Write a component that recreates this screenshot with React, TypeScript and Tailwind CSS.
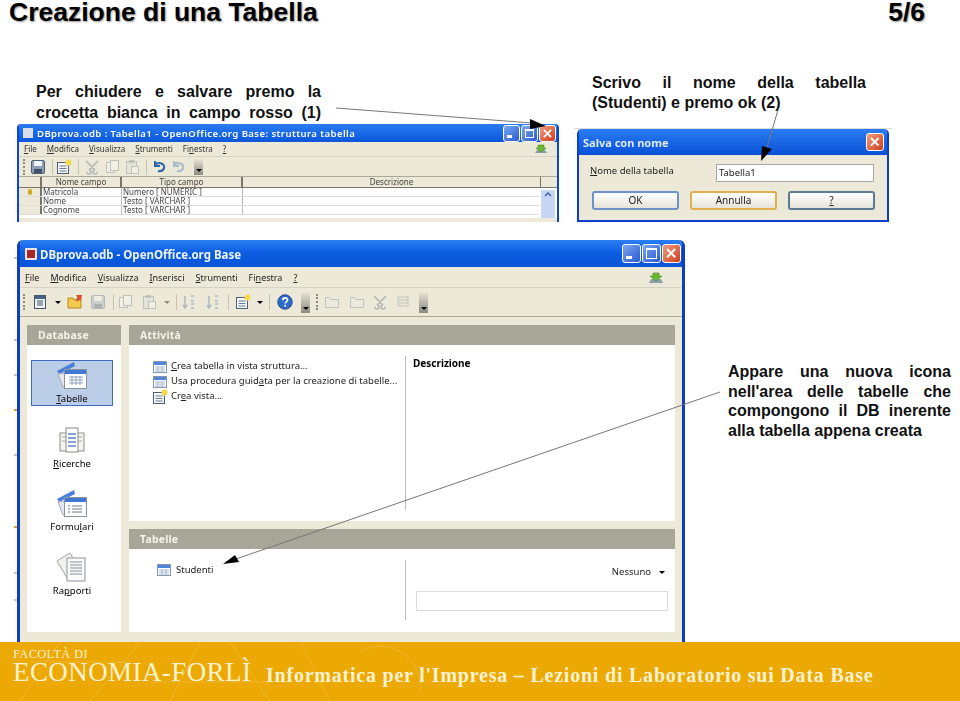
const ui = "font-['Noto_Sans',sans-serif]";

function Under({ text, at }: { text: string; at: number }) {
  return (
    <>
      {text.slice(0, at)}
      <u>{text[at]}</u>
      {text.slice(at + 1)}
    </>
  );
}

function TableIcon({ size = 14 }: { size?: number }) {
  return (
    <svg width={size} height={size} viewBox="0 0 14 14" className="shrink-0">
      <rect x="0.5" y="1.5" width="13" height="11" fill="#fff" stroke="#8a98ad" />
      <rect x="1" y="2" width="12" height="3" fill="#4f86d8" />
      <path d="M2 7h10M2 9h10M2 11h10M5 6v6M9 6v6" stroke="#9fb3cc" strokeWidth="0.8" />
    </svg>
  );
}

function XpButtons({ size }: { size: number }) {
  const box = { width: size, height: size };
  return (
    <div className="flex items-center gap-[1px]">
      <div style={box} className="flex items-end rounded-[3px] border border-white bg-gradient-to-br from-[#7ea6ee] to-[#2b58d0] p-[3px]">
        <div className="h-[3px] w-1/2 bg-white" />
      </div>
      <div style={box} className="rounded-[3px] border border-white bg-gradient-to-br from-[#7ea6ee] to-[#2b58d0] p-[3px]">
        <div className="h-full w-full border border-t-2 border-white" />
      </div>
      <CloseButton size={size} />
    </div>
  );
}

function CloseButton({ size }: { size: number }) {
  return (
    <div style={{ width: size, height: size }} className="flex items-center justify-center rounded-[3px] border border-white bg-gradient-to-br from-[#ee9a7c] to-[#cf3a14]">
      <svg viewBox="0 0 10 10" className="h-3/5 w-3/5">
        <path d="M1 1l8 8M9 1l-8 8" stroke="#fff" strokeWidth="2" />
      </svg>
    </div>
  );
}

type ToolKind = "save" | "doc" | "folder" | "copy" | "paste" | "help" | "form" | "sort" | "cut" | "undo" | "outline" | "lines";

function Toolbtn({ kind, faded, className = "" }: { kind: ToolKind; faded?: boolean; className?: string }) {
  return (
    <svg width="16" height="16" viewBox="0 0 16 16" className={`shrink-0 ${faded ? "opacity-35" : ""} ${className}`}>
      {kind === "save" && (
        <>
          <rect x="1.5" y="1.5" width="13" height="13" rx="1.5" fill="#8fa0b5" stroke="#4d5f78" />
          <rect x="4" y="2" width="8" height="5" fill="#eef2f6" />
          <rect x="4" y="10" width="8" height="4" fill="#405068" />
        </>
      )}
      {kind === "doc" && (
        <>
          <rect x="2.5" y="1.5" width="11" height="13" fill="#eef1f5" stroke="#46566d" />
          <rect x="3" y="2" width="10" height="3" fill="#49628a" />
          <path d="M5 7h6M5 9h6M5 11h6" stroke="#46566d" />
        </>
      )}
      {kind === "folder" && (
        <>
          <path d="M1 14V4h5l1 2h7v8z" fill="#f3c84f" stroke="#b68a1c" />
          <path d="M9 1h6l-1 6-1.5-1.5-2 2-2-2 2-2z" fill="#d8502c" />
        </>
      )}
      {kind === "copy" && (
        <>
          <rect x="2.5" y="3.5" width="8" height="10" fill="#fff" stroke="#6d7a88" />
          <rect x="6.5" y="1.5" width="8" height="10" fill="#fff" stroke="#6d7a88" />
        </>
      )}
      {kind === "paste" && (
        <>
          <rect x="2.5" y="2.5" width="10" height="12" fill="#ddd" stroke="#6d7a88" />
          <rect x="5" y="1" width="5" height="3" fill="#6d7a88" />
          <rect x="7.5" y="7.5" width="7" height="7" fill="#fff" stroke="#6d7a88" />
        </>
      )}
      {kind === "sort" && <path d="M3 2v11M1 11l2 3 2-3M9 2l3 0M9 7l3 0M9 10l3 0M9 14l3 0" fill="none" stroke="#3a5d8f" strokeWidth="1.5" />}
      {kind === "cut" && <path d="M2 2l9 9M14 2l-9 9M5 11a2 2 0 1 1-2 2M11 11a2 2 0 1 0 2 2" fill="none" stroke="#4a5e78" strokeWidth="1.6" />}
      {kind === "undo" && <path d="M3 6a5 4 0 1 1 3 6M3 2v5h5" fill="none" stroke="#2d62ad" strokeWidth="2" />}
      {kind === "outline" && <path d="M1.5 13.5V3.5h4l1 2h8v8z" fill="#eee" stroke="#6d7a88" />}
      {kind === "lines" && <path d="M3 3h10M3 6h10M3 9h10M3 12h10M3 3v9M13 3v9" fill="none" stroke="#6d7a88" />}
      {kind === "help" && (
        <>
          <circle cx="8" cy="8" r="7.2" fill="#2f6bc9" stroke="#1c4690" />
          <path d="M5.7 6.2c.2-3 4.8-3 4.8-.2 0 1.8-2.3 1.8-2.3 3.6" fill="none" stroke="#fff" strokeWidth="1.7" />
          <rect x="7.3" y="10.8" width="1.8" height="1.8" fill="#fff" />
        </>
      )}
      {kind === "form" && (
        <>
          <rect x="1.5" y="3.5" width="11" height="11" fill="#f6f7f9" stroke="#4d5f78" />
          <path d="M3.5 7h7M3.5 9.5h7M3.5 12h7" stroke="#6a7b92" />
          <circle cx="12.5" cy="3.5" r="3" fill="#f6d84a" />
        </>
      )}
    </svg>
  );
}

function Grip({ className = "" }: { className?: string }) {
  return <div className={`h-[16px] w-[2px] shrink-0 border-l-2 border-dotted border-[#8f8c7c] ${className}`} />;
}

function Sep({ className = "" }: { className?: string }) {
  return <div className={`h-[16px] w-px shrink-0 bg-[#c6c3b2] ${className}`} />;
}

function Caret({ className = "" }: { className?: string }) {
  return <div className={`h-0 w-0 shrink-0 border-x-[3px] border-t-[3px] border-x-transparent border-t-black ${className}`} />;
}

function Overflow({ h, className = "" }: { h: number; className?: string }) {
  return (
    <div style={{ height: h }} className={`flex w-[9px] shrink-0 items-end justify-center bg-gradient-to-b from-[#e8e5d6] to-[#8d8b7f] pb-[3px] ${className}`}>
      <Caret />
    </div>
  );
}

function SideItem({ label, at, selected, children }: { label: string; at: number; selected?: boolean; children: React.ReactNode }) {
  return (
    <div className={`ml-[4px] mr-[8px] flex h-[46px] flex-col items-center justify-end ${selected ? "border border-[#3c6cc4] bg-[#bccde8]" : ""}`}>
      {children}
      <span className="mt-[1px] text-[9.5px] leading-[13px] text-black">
        <Under text={label} at={at} />
      </span>
    </div>
  );
}

function BigIcon({ kind }: { kind: "table" | "query" | "form" | "report" }) {
  if (kind === "query") {
    return (
      <svg width="30" height="30" viewBox="0 0 30 30">
        <rect x="3" y="7" width="9" height="18" fill="#f3f3f1" stroke="#8c8c88" />
        <rect x="18" y="7" width="9" height="18" fill="#f3f3f1" stroke="#8c8c88" />
        <rect x="9" y="2" width="12" height="24" fill="#fff" stroke="#8c8c88" />
        <path d="M11 8h8M11 12h8M11 16h8M11 20h8" stroke="#5c85c8" strokeWidth="1.5" />
        <path d="M5 11h5M5 15h5M20 11h5M20 15h5" stroke="#a8a8a4" />
      </svg>
    );
  }
  if (kind === "report") {
    return (
      <svg width="32" height="32" viewBox="0 0 32 32">
        <path d="M1 10L14 2l12 20-13 8z" fill="#f2f2f0" stroke="#a4a4a0" />
        <rect x="11" y="7" width="18" height="23" fill="#fafafa" stroke="#8f959c" />
        <path d="M14 11h12M14 14h12M14 17h12M14 20h12M14 23h12" stroke="#8a9096" />
      </svg>
    );
  }
  return (
    <svg width="32" height="30" viewBox="0 0 32 30">
      <path d="M1 10L18 1l1 4L3 13z" fill="#4b80d8" />
      <path d="M2 13l8-1v14h-3z" fill="#e5e8ee" stroke="#a5abb5" />
      <rect x="8.5" y="8.5" width="22" height="19" fill="#fff" stroke="#8a93a0" />
      <rect x="9" y="9" width="21" height="4" fill="#3f78d2" />
      {kind === "table" ? (
        <path d="M13 16h14M13 19h14M13 22h14M16 15v9M20 15v9M24 15v9" stroke="#8ea2bf" />
      ) : (
        <path d="M12 17h2M16 17h10M12 20h2M16 20h10M12 23h2M16 23h10" stroke="#6f7884" />
      )}
    </svg>
  );
}

function StructureWindow() {
  const rows = [
    ["Matricola", "Numero [ NUMERIC ]"],
    ["Nome", "Testo [ VARCHAR ]"],
    ["Cognome", "Testo [ VARCHAR ]"],
  ];
  return (
    <div className={`${ui} h-[98px] overflow-hidden rounded-t-[4px] border-x-2 border-[#0c46d4] bg-[#ece9d8] blur-[0.3px]`}>
      <div className="flex h-[18px] items-center justify-between bg-gradient-to-b from-[#2a7cf0] to-[#0a56dc] pl-[4px] pr-[1px]">
        <div className="flex items-center gap-[4px]">
          <div className="h-[10px] w-[10px] bg-[#d8dde8]" />
          <span className="pt-[2px] text-[9.5px] font-semibold tracking-[0.44px] text-white">DBprova.odb : Tabella1 - OpenOffice.org Base: struttura tabella</span>
        </div>
        <XpButtons size={17} />
      </div>
      <div className="flex h-[15px] items-center justify-between border-b border-[#d6d3c2] px-[5px] text-[8px] text-[#333]">
        <div className="flex gap-[10px]">
          <span><Under text="File" at={0} /></span>
          <span><Under text="Modifica" at={0} /></span>
          <span><Under text="Visualizza" at={0} /></span>
          <span><Under text="Strumenti" at={0} /></span>
          <span><Under text="Finestra" at={2} /></span>
          <span><u>?</u></span>
        </div>
        <svg width="14" height="10" viewBox="0 0 14 10" className="mr-[4px]">
          <path d="M1 9h12L11 6H3z" fill="#8aa0a8" />
          <path d="M4 1h6v3h2L7 8 2 4h2z" fill="#6cb82c" stroke="#3f7f18" strokeWidth="0.5" />
        </svg>
      </div>
      <div className="flex h-[20px] items-center border-b border-[#aca899] pl-[4px]">
        <Grip />
        <Toolbtn kind="save" className="ml-[5px]" />
        <Sep className="ml-[6px]" />
        <Toolbtn kind="form" className="ml-[3px]" />
        <Sep className="ml-[6px]" />
        <Toolbtn kind="cut" faded className="ml-[5px]" />
        <Toolbtn kind="copy" faded className="ml-[4px]" />
        <Toolbtn kind="paste" faded className="ml-[4px]" />
        <Sep className="ml-[6px]" />
        <Toolbtn kind="undo" className="ml-[5px]" />
        <Toolbtn kind="undo" faded className="ml-[3px]" />
        <Overflow h={16} className="ml-[7px]" />
      </div>
      <div className="grid h-[11px] grid-cols-[23px_80px_121px_298px_1fr] border-b border-[#77756a] text-center text-[8px] leading-[10px] text-[#444]">
        <div className="border-r-2 border-[#77756a]" />
        <div className="border-r-2 border-[#77756a]">Nome campo</div>
        <div className="border-r-2 border-[#77756a]">Tipo campo</div>
        <div className="border-r border-[#77756a]">Descrizione</div>
        <div />
      </div>
      <div className="flex bg-white">
        <div className="flex-1">
          {rows.map(([name, type], i) => (
            <div key={name} className="grid h-[9px] grid-cols-[23px_80px_121px_1fr] border-b border-[#dcdcdc] text-[8px] leading-[8px] text-[#444]">
              <div className="flex items-center justify-center border-r-2 border-[#77756a] bg-[#ece9d8]">
                {i === 0 && <div className="h-[6px] w-[4px] rounded-full bg-[#d8a81c]" />}
              </div>
              <div className="border-r border-[#bbb] pl-[1px]">{name}</div>
              <div className="border-r border-[#bbb] pl-[1px]">{type}</div>
              <div />
            </div>
          ))}
        </div>
        <div className="mx-[2px] mt-[2px] flex h-[28px] w-[14px] justify-center bg-[#c6d6f4] pt-[2px]">
          <svg width="8" height="5" viewBox="0 0 8 5">
            <path d="M1 4l3-3 3 3" fill="none" stroke="#3a5f9f" strokeWidth="1.4" />
          </svg>
        </div>
      </div>
    </div>
  );
}

function SaveDialog() {
  return (
    <div className={`${ui} h-[93px] overflow-hidden rounded-t-[5px] border-x-[2px] border-b-[2px] border-[#0b3fc8] bg-[#ece9d8] blur-[0.3px]`}>
      <div className="flex h-[26px] items-center justify-between bg-gradient-to-b from-[#2a7cf0] to-[#0a50d8] pl-[4px] pr-[3px]">
        <span className="pt-[2px] text-[11px] font-bold text-[#dfe9fb]">Salva con nome</span>
        <CloseButton size={18} />
      </div>
      <div className="flex h-[36px] items-center pl-[11px] text-[9.5px] text-[#222]">
        <span className="w-[126px] pb-[4px]">
          <Under text="Nome della tabella" at={0} />
        </span>
        <div className="flex h-[18px] w-[158px] items-center border border-[#a6a6a2] bg-white pl-[2px]">Tabella1</div>
      </div>
      <div className="flex gap-[11px] pl-[13px] text-[10px] text-[#222]">
        {["OK", "Annulla", "?"].map((b) => (
          <div
            key={b}
            className={`flex h-[19px] w-[87px] items-center justify-center rounded-[3px] border-2 bg-gradient-to-b from-white to-[#e6e4d8] ${
              b === "Annulla" ? "border-[#e0b050]" : b === "OK" ? "border-[#6d92c8]" : "border-[#5b7a94]"
            }`}
          >
            {b === "?" ? <u>?</u> : b}
          </div>
        ))}
      </div>
    </div>
  );
}

function PanelHead({ title }: { title: string }) {
  return <div className="flex h-[20px] items-center bg-[#a8a698] pl-[11px] pt-[2px] text-[10.5px] font-bold tracking-[0.2px] text-[#f4f3ec]">{title}</div>;
}

function BaseWindow() {
  const actions: [string, number, React.ReactNode][] = [
    ["Crea tabella in vista struttura...", 0, <TableIcon />],
    ["Usa procedura guidata per la creazione di tabelle...", 18, <TableIcon />],
    ["Crea vista...", 2, <Toolbtn kind="form" className="-mx-[1px]" />],
  ];
  const menus: [string, number][] = [
    ["File", 0],
    ["Modifica", 0],
    ["Visualizza", 0],
    ["Inserisci", 0],
    ["Strumenti", 0],
    ["Finestra", 2],
  ];
  return (
    <div className={`${ui} flex h-[402px] w-[668px] flex-col overflow-hidden rounded-t-[6px] border-x-[3px] border-[#0c3fc0] bg-[#ece9d8] blur-[0.3px]`}>
      <div className="flex h-[27px] shrink-0 items-center justify-between bg-gradient-to-b from-[#2a7ef2] via-[#0a5be0] to-[#0a56d8] pl-[5px] pr-[1px]">
        <div className="flex items-center gap-[3px]">
          <div className="h-[12px] w-[12px] rounded-[1px] border-2 border-[#f0e4e0] bg-[#a82828]" />
          <span className="pt-[3px] text-[11.5px] font-bold text-[#eef3fd]">DBprova.odb - OpenOffice.org Base</span>
        </div>
        <XpButtons size={19} />
      </div>
      <div className="flex h-[21px] shrink-0 items-center justify-between border-b border-[#d6d3c2] pl-[5px] pr-[18px] pt-[1px] text-[9px] text-[#222]">
        <div className="flex gap-[11px]">
          {menus.map(([m, at]) => (
            <span key={m}>
              <Under text={m} at={at} />
            </span>
          ))}
          <span>
            <u>?</u>
          </span>
        </div>
        <svg width="16" height="12" viewBox="0 0 16 12">
          <path d="M1 11h14l-2-4H3z" fill="#8aa0a8" />
          <path d="M5 1h6v3h3l-6 5-6-5h3z" fill="#6cb82c" stroke="#3f7f18" strokeWidth="0.5" />
        </svg>
      </div>
      <div className="flex h-[29px] shrink-0 items-center border-b border-[#aca899] pl-[3px]">
        <Grip />
        <Toolbtn kind="doc" className="ml-[7px]" />
        <Caret className="ml-[7px]" />
        <Toolbtn kind="folder" className="ml-[6px]" />
        <Toolbtn kind="save" faded className="ml-[7px]" />
        <Sep className="ml-[7px]" />
        <Toolbtn kind="copy" faded className="ml-[3px]" />
        <Toolbtn kind="paste" faded className="ml-[8px]" />
        <Caret className="ml-[7px] opacity-40" />
        <Sep className="ml-[6px]" />
        <Toolbtn kind="sort" faded className="ml-[5px]" />
        <Toolbtn kind="sort" faded className="ml-[8px]" />
        <Sep className="ml-[6px]" />
        <Toolbtn kind="form" className="ml-[6px]" />
        <Caret className="ml-[6px]" />
        <Sep className="ml-[6px]" />
        <Toolbtn kind="help" className="ml-[7px]" />
        <Overflow h={21} className="ml-[8px]" />
        <Grip className="ml-[6px]" />
        <Toolbtn kind="outline" faded className="ml-[6px]" />
        <Toolbtn kind="outline" faded className="ml-[9px]" />
        <Toolbtn kind="cut" faded className="ml-[7px]" />
        <Toolbtn kind="lines" faded className="ml-[7px]" />
        <Overflow h={21} className="ml-[8px]" />
      </div>
      <div className="flex min-h-0 flex-1 gap-[8px] px-[7px] pt-[8px]">
        <div className="flex h-[307px] w-[94px] shrink-0 flex-col bg-white">
          <PanelHead title="Database" />
          <div className="flex flex-col gap-[17.6px] pt-[15px]">
            <SideItem label="Tabelle" at={0} selected>
              <BigIcon kind="table" />
            </SideItem>
            <SideItem label="Ricerche" at={0}>
              <BigIcon kind="query" />
            </SideItem>
            <SideItem label="Formulari" at={5}>
              <BigIcon kind="form" />
            </SideItem>
            <SideItem label="Rapporti" at={2}>
              <BigIcon kind="report" />
            </SideItem>
          </div>
        </div>
        <div className="flex min-w-0 flex-1 flex-col gap-[8px]">
          <div className="h-[196px] shrink-0 bg-white">
            <PanelHead title="Attività" />
            <div className="flex h-[165px] pt-[11px]">
              <div className="w-[277px] border-r border-[#bbb] pl-[24px] pt-[3px]">
                {actions.map(([label, at, icon]) => (
                  <div key={label} className="flex h-[15px] items-center gap-[4px] whitespace-nowrap text-[9.5px] text-[#222]">
                    {icon}
                    <span>
                      <Under text={label} at={at} />
                    </span>
                  </div>
                ))}
              </div>
              <div className="pl-[7px] text-[10px] font-bold leading-[14px] text-black">Descrizione</div>
            </div>
          </div>
          <div className="h-[103px] shrink-0 bg-white">
            <PanelHead title="Tabelle" />
            <div className="flex pt-[11px]">
              <div className="flex h-[60px] w-[277px] items-start gap-[5px] border-r border-[#bbb] pl-[28px] pt-[3px] text-[9.5px] text-[#222]">
                <TableIcon />
                Studenti
              </div>
              <div className="flex flex-1 flex-col items-end pl-[10px] pr-[7px] pt-[5px] text-[9.5px] text-[#222]">
                <div className="flex items-center gap-[8px] pr-[3px]">
                  Nessuno
                  <Caret />
                </div>
                <div className="mt-[12px] h-[20px] w-full border border-[#d9d9d9] bg-white" />
              </div>
            </div>
          </div>
        </div>
      </div>
    </div>
  );
}

export default function App() {
  return (
    <div className="relative flex h-[701px] w-[960px] flex-col overflow-hidden bg-white font-['Liberation_Sans',sans-serif] text-black">
      <header className="flex h-[70px] shrink-0 items-start justify-between pl-[9px] pr-[35px] text-[26.5px] font-bold [text-shadow:1px_1px_2px_#999]">
        <h1 className="h-[30px] whitespace-nowrap leading-[25px]">Creazione di una Tabella</h1>
        <span className="h-[30px] leading-[25px]">5/6</span>
      </header>

      <div className="flex h-[152px] shrink-0 pl-[17px]">
        <div className="flex w-[542px] flex-col">
          <p className="ml-[19px] mt-[11px] h-[43px] w-[285px] text-justify text-[16px] font-bold leading-[21px] text-[#111] [text-align-last:justify]">
            Per chiudere e salvare premo la crocetta bianca in campo rosso (1)
          </p>
          <StructureWindow />
        </div>
        <div className="ml-[18px] flex w-[312px] flex-col">
          <p className="ml-[15px] mt-[3px] h-[55px] w-[274px] text-justify text-[16px] font-bold leading-[20px] text-[#111]">
            Scrivo il nome della tabella (Studenti) e premo ok (2)
          </p>
          <div className="-mx-[3px] h-px bg-[#dcdcdc]" />
          <SaveDialog />
        </div>
      </div>

      <div className="mt-[18px] flex h-[402px] shrink-0 pl-[17px]">
        <BaseWindow />
        <p className="ml-[43px] mt-[122px] h-fit w-[223px] text-justify text-[16px] font-bold leading-[19.7px] text-[#111]">
          Appare una nuova icona nell'area delle tabelle che compongono il DB inerente alla tabella appena creata
        </p>
      </div>

      <footer className="relative flex min-h-0 flex-1 items-start bg-[#eca903] pl-[13px] pt-[6px] font-['Liberation_Serif',serif] text-[#fdf1cf]">
        <svg className="absolute left-0 top-0 opacity-15" width="460" height="59" viewBox="0 0 460 59">
          <path d="M20 59L60 0M90 59l50-59M170 59l30-59M230 0l40 59M300 0l30 59M360 10a40 40 0 0 1 60 40M30 20h100M150 40h120" fill="none" stroke="#fff" />
        </svg>
        <div className="relative w-[253px] shrink-0">
          <div className="text-[12.5px] leading-[13px] tracking-[0.3px]">FACOLTÀ DI</div>
          <div className="-mt-[2px] text-[27px] leading-[27px] tracking-[0.42px]">ECONOMIA-FORLÌ</div>
        </div>
        <div className="relative pt-[16px] text-[20px] font-bold leading-[23px] tracking-[0.78px]">Informatica per l'Impresa – Lezioni di Laboratorio sui Data Base</div>
      </footer>

      <svg className="pointer-events-none absolute left-0 top-0" width="960" height="701" viewBox="0 0 960 701">
        <path d="M336 108L532 123" stroke="#777" fill="none" />
        <path d="M530 119L546 126L530 129z" fill="#000" />
        <path d="M778 110L767 147" stroke="#777" fill="none" />
        <path d="M762 146L772 149L761 161z" fill="#000" />
        <path d="M720 392L236 559" stroke="#777" fill="none" />
        <path d="M223 564L235 555L239 562z" fill="#000" />
        <path d="M14 258h3M14 340h3M14 375h3M14 455h3M14 573h3M14 600h3" stroke="#888" />
        <path d="M14 410h3M14 527h3" stroke="#d8a030" strokeWidth="2" />
      </svg>
    </div>
  );
}
